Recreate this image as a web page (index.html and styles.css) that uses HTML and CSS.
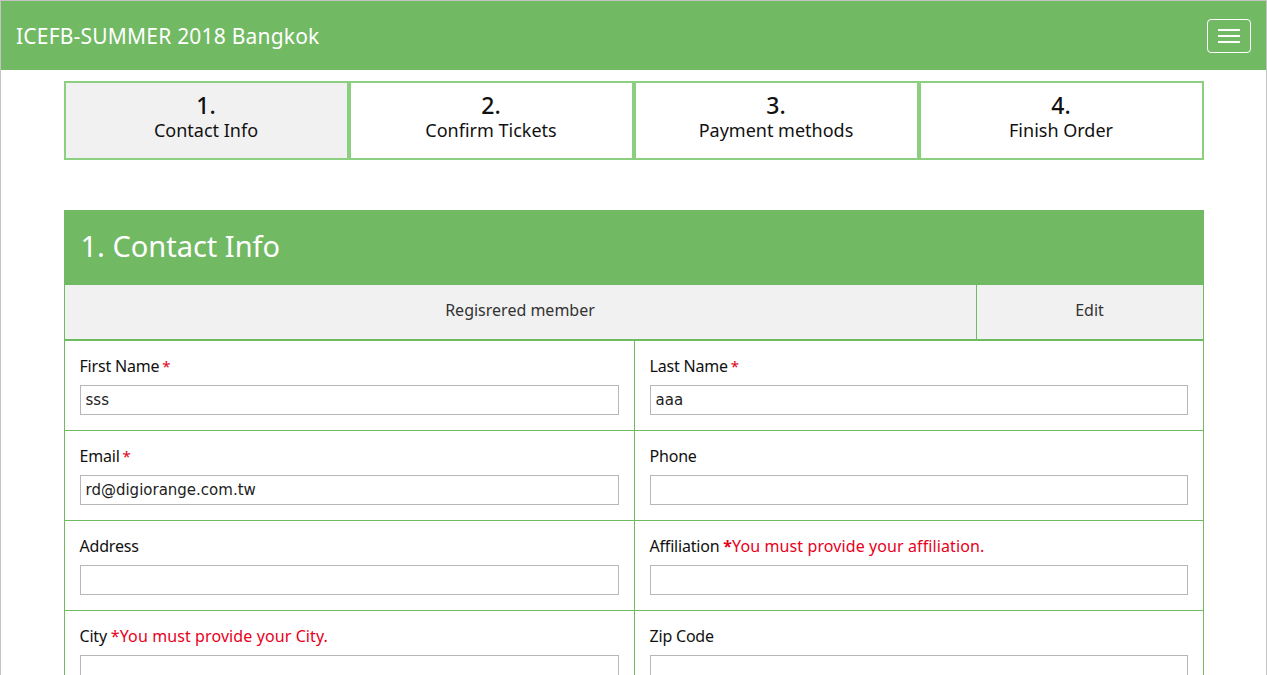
FILE: index.html
```html
<!DOCTYPE html>
<html>
<head>
<meta charset="utf-8">
<title>ICEFB-SUMMER 2018 Bangkok</title>
<link rel="stylesheet" href="styles.css">
</head>
<body>
<div class="frame">
  <nav class="navbar">
    <div class="brand">ICEFB-SUMMER 2018 Bangkok</div>
    <button class="toggler" aria-label="menu"><span></span><span></span><span></span></button>
  </nav>
  <main class="container">
    <div class="steps">
      <div class="step active"><div class="num">1.</div><div class="lbl">Contact Info</div></div>
      <div class="step"><div class="num">2.</div><div class="lbl">Confirm Tickets</div></div>
      <div class="step"><div class="num">3.</div><div class="lbl">Payment methods</div></div>
      <div class="step"><div class="num">4.</div><div class="lbl">Finish Order</div></div>
    </div>
    <section class="panel">
      <h2 class="panel-title">1. Contact Info</h2>
      <div class="member-row">
        <div class="member">Regisrered member</div>
        <div class="edit">Edit</div>
      </div>
      <div class="form-grid">
        <div class="field"><label>First Name<span class="req">*</span></label><input type="text" value="sss"></div>
        <div class="field"><label>Last Name<span class="req">*</span></label><input type="text" value="aaa"></div>
        <div class="field"><label>Email<span class="req">*</span></label><input type="text" value="rd@digiorange.com.tw"></div>
        <div class="field"><label>Phone</label><input type="text" value=""></div>
        <div class="field"><label>Address</label><input type="text" value=""></div>
        <div class="field"><label>Affiliation <span class="err"><b>*</b>You must provide your affiliation.</span></label><input type="text" value=""></div>
        <div class="field"><label>City <span class="err">*You must provide your City.</span></label><input type="text" value=""></div>
        <div class="field"><label>Zip Code</label><input type="text" value=""></div>
      </div>
    </section>
  </main>
</div>
</body>
</html>
```

FILE: styles.css
```css
* { box-sizing: border-box; }
html, body { margin: 0; padding: 0; background: #fff; }
body {
  font-family: "Noto Sans", "Open Sans", sans-serif;
  color: #222;
  overflow: hidden;
}
.frame {
  min-height: 675px;
  border-top: 1px solid #c4c4c4;
  border-left: 1px solid #c4c4c4;
  border-right: 1px solid #c4c4c4;
}
.navbar {
  height: 69px;
  background: #71b963;
  display: flex;
  align-items: center;
  justify-content: space-between;
  padding: 0 15px 0 15px;
}
.brand {
  color: #fff;
  font-size: 21px;
  letter-spacing: 0.2px;
}
.toggler {
  width: 44px;
  height: 34px;
  border: 1px solid #fff;
  border-radius: 4px;
  background: transparent;
  display: flex;
  flex-direction: column;
  align-items: center;
  justify-content: center;
  gap: 4px;
  padding: 0;
  margin-top: 1px;
}
.toggler span {
  display: block;
  width: 22px;
  height: 2px;
  background: #fff;
}
.container {
  width: 1140px;
  margin: 0 auto;
  padding-top: 11px;
}
.steps {
  display: grid;
  grid-template-columns: repeat(4, 1fr);
}
.step {
  height: 79px;
  border: 2px solid #8ccf7e;
  display: flex;
  flex-direction: column;
  align-items: center;
  justify-content: center;
  padding-bottom: 7px;
  color: #111;
}
.step.active { background: #f1f1f1; }
.step .num {
  font-size: 23px;
  font-weight: 500;
  line-height: 26px;
}
.step .lbl {
  font-size: 18px;
  line-height: 24px;
}
.panel {
  margin-top: 50px;
  border: 1px solid #6fbb60;
  border-top: none;
}
.panel-title {
  margin: 0;
  height: 75px;
  background: #71b963;
  color: #fff;
  font-weight: 400;
  font-size: 29px;
  display: flex;
  align-items: center;
  padding-left: 17px;
  padding-bottom: 4px;
  margin-left: -1px;
  margin-right: -1px;
}
.member-row {
  display: grid;
  grid-template-columns: 911px 1fr;
  height: 56px;
  background: #f1f1f1;
  border-bottom: 2px solid #6fbb60;
  font-size: 16px;
  color: #333;
}
.member-row > div {
  display: flex;
  align-items: center;
  justify-content: center;
  padding-bottom: 4px;
}
.member-row .edit { border-left: 1px solid #6fbb60; }
.form-grid {
  display: grid;
  grid-template-columns: 570px 1fr;
}
.field {
  height: 90px;
  padding: 14px 15px 0 15px;
  border-bottom: 1px solid #6fbb60;
}
.field:nth-child(odd) { border-right: 1px solid #6fbb60; }
.field label {
  display: block;
  font-size: 16px;
  color: #111;
  line-height: 22px;
  height: 30px;
  letter-spacing: -0.2px;
}
.req { color: #e0001a; margin-left: 3px; font-size: 15px; }
.err { color: #e8001c; letter-spacing: 0.1px; }
.err b { font-weight: 700; }
.field input {
  display: block;
  width: 100%;
  height: 30px;
  border: 1px solid #b7b7b7;
  border-radius: 0;
  padding: 0 5px;
  font-family: "DejaVu Sans", sans-serif;
  font-size: 15px;
  color: #222;
  outline: none;
  background: #fff;
}
```
